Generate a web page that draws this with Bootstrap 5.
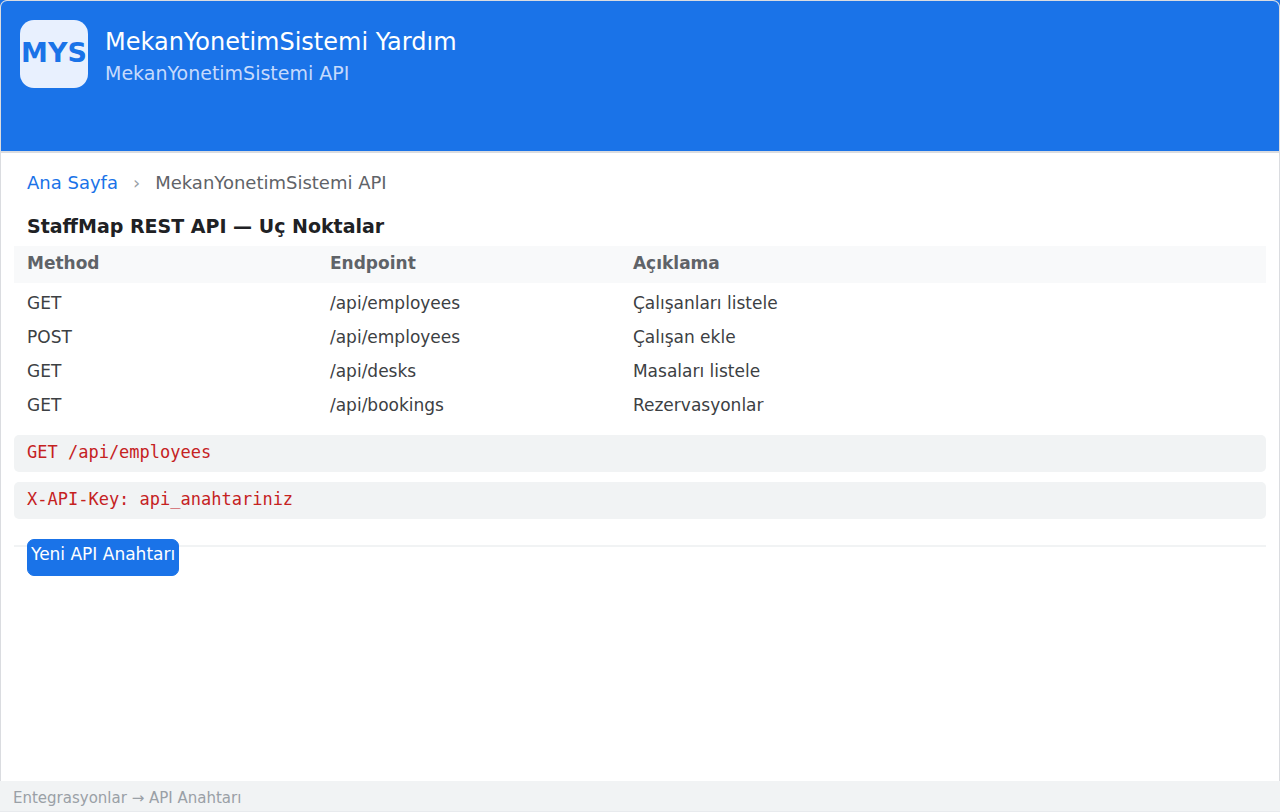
<!DOCTYPE html>
<html lang="tr">
<head>
<meta charset="utf-8">
<meta name="viewport" content="width=device-width, initial-scale=1">
<title>MekanYonetimSistemi Yardım</title>
<link href="https://cdn.jsdelivr.net/npm/bootstrap@5.3.0/dist/css/bootstrap.min.css" rel="stylesheet">
<style>
  body { font-family: "DejaVu Sans", sans-serif; font-size: 17px; line-height: 20px; color: #3c4043; background: linear-gradient(#1a73e8 8px, #fff 8px); }
  a { color: #1a73e8; }
  .frame { background: #fff; border: 1px solid #dadce0; border-bottom: 0; border-radius: 7px 7px 0 0; overflow: hidden; }
  .help-header { background: #1a73e8; border-bottom: 2px solid #dadce0; min-height: 152px; padding: 19px; gap: 17px; }
  .brand-tile { width: 68px; height: 68px; border-radius: 14px; background: #e8f0fe; color: #1a73e8; font-size: 27px; line-height: 32px; padding-bottom: 3px; }
  .help-title { font-size: 24px; line-height: 28px; margin-top: 8px; }
  .help-subtitle { font-size: 19px; line-height: 24px; margin-top: 5px; color: #c6dafc; }
  .help-main { padding: 0 13px; }
  .crumbs { padding: 18px 13px 0; font-size: 18px; line-height: 24px; --bs-breadcrumb-divider: "›"; --bs-breadcrumb-divider-color: #9aa0a6; --bs-breadcrumb-item-padding-x: 15px; --bs-breadcrumb-item-active-color: #5f6368; }
  .section-title { font-size: 19px; line-height: 24px; padding: 0 13px; margin: 19px 0 8px; color: #202124; }
  .endpoints { table-layout: fixed; --bs-table-color: #3c4043; color: #3c4043; --bs-table-bg: transparent; }
  .endpoints th { width: 24.2%; padding: 7px 13px 10px; background: #f8f9fa; color: #5f6368; }
  .endpoints th:last-child { width: auto; }
  .endpoints td { padding: 7px 13px; height: 34px; }
  .endpoints tbody::before { content: ""; display: block; height: 3px; }
  .code-list { padding-top: 13px; }
  .code-line { font-family: "DejaVu Sans Mono", monospace; font-size: 17px; line-height: 20px; color: #c5221f; background: #f1f3f4; border-radius: 5px; padding: 7px 13px 10px; margin: 0 0 10px; }
  .help-actions { border-top: 2px solid #f1f3f4; margin-top: 26px; padding: 0 13px; }
  .btn-key { --bs-btn-bg: #1a73e8; --bs-btn-border-color: #1a73e8; --bs-btn-border-radius: 7px; --bs-btn-padding-x: 3px; font-size: 17px; line-height: 20px; padding-top: 4px; padding-bottom: 11px; margin-top: -8px; }
  .help-footer { background: #f1f3f4; color: #9aa0a6; font-size: 15px; line-height: 18px; padding: 8px 13px 4px; border-bottom: 1px solid #e8eaed; }
</style>
</head>
<body class="d-flex flex-column min-vh-100">
  <div class="frame flex-grow-1">
    <header class="help-header d-flex align-items-start">
      <div class="brand-tile d-flex align-items-center justify-content-center flex-shrink-0 fw-bold">MYS</div>
      <div>
        <h1 class="help-title fw-normal text-white mb-0">MekanYonetimSistemi Yardım</h1>
        <p class="help-subtitle mb-0">MekanYonetimSistemi API</p>
      </div>
    </header>
    <main class="help-main">
      <nav aria-label="Sayfa yolu">
        <ol class="breadcrumb crumbs mb-0">
          <li class="breadcrumb-item"><a href="#" class="text-decoration-none">Ana Sayfa</a></li>
          <li class="breadcrumb-item active" aria-current="page">MekanYonetimSistemi API</li>
        </ol>
      </nav>
      <h2 class="section-title fw-bold">StaffMap REST API — Uç Noktalar</h2>
      <table class="table table-borderless endpoints mb-0">
        <thead>
          <tr><th scope="col">Method</th><th scope="col">Endpoint</th><th scope="col">Açıklama</th></tr>
        </thead>
        <tbody>
          <tr><td>GET</td><td>/api/employees</td><td>Çalışanları listele</td></tr>
          <tr><td>POST</td><td>/api/employees</td><td>Çalışan ekle</td></tr>
          <tr><td>GET</td><td>/api/desks</td><td>Masaları listele</td></tr>
          <tr><td>GET</td><td>/api/bookings</td><td>Rezervasyonlar</td></tr>
        </tbody>
      </table>
      <div class="code-list">
        <pre class="code-line">GET /api/employees</pre>
        <pre class="code-line">X-API-Key: api_anahtariniz</pre>
      </div>
      <div class="help-actions">
        <button type="button" class="btn btn-primary btn-key">Yeni API Anahtarı</button>
      </div>
    </main>
  </div>
  <footer class="help-footer">Entegrasyonlar → API Anahtarı</footer>
  <script src="https://cdn.jsdelivr.net/npm/bootstrap@5.3.0/dist/js/bootstrap.bundle.min.js"></script>
</body>
</html>
